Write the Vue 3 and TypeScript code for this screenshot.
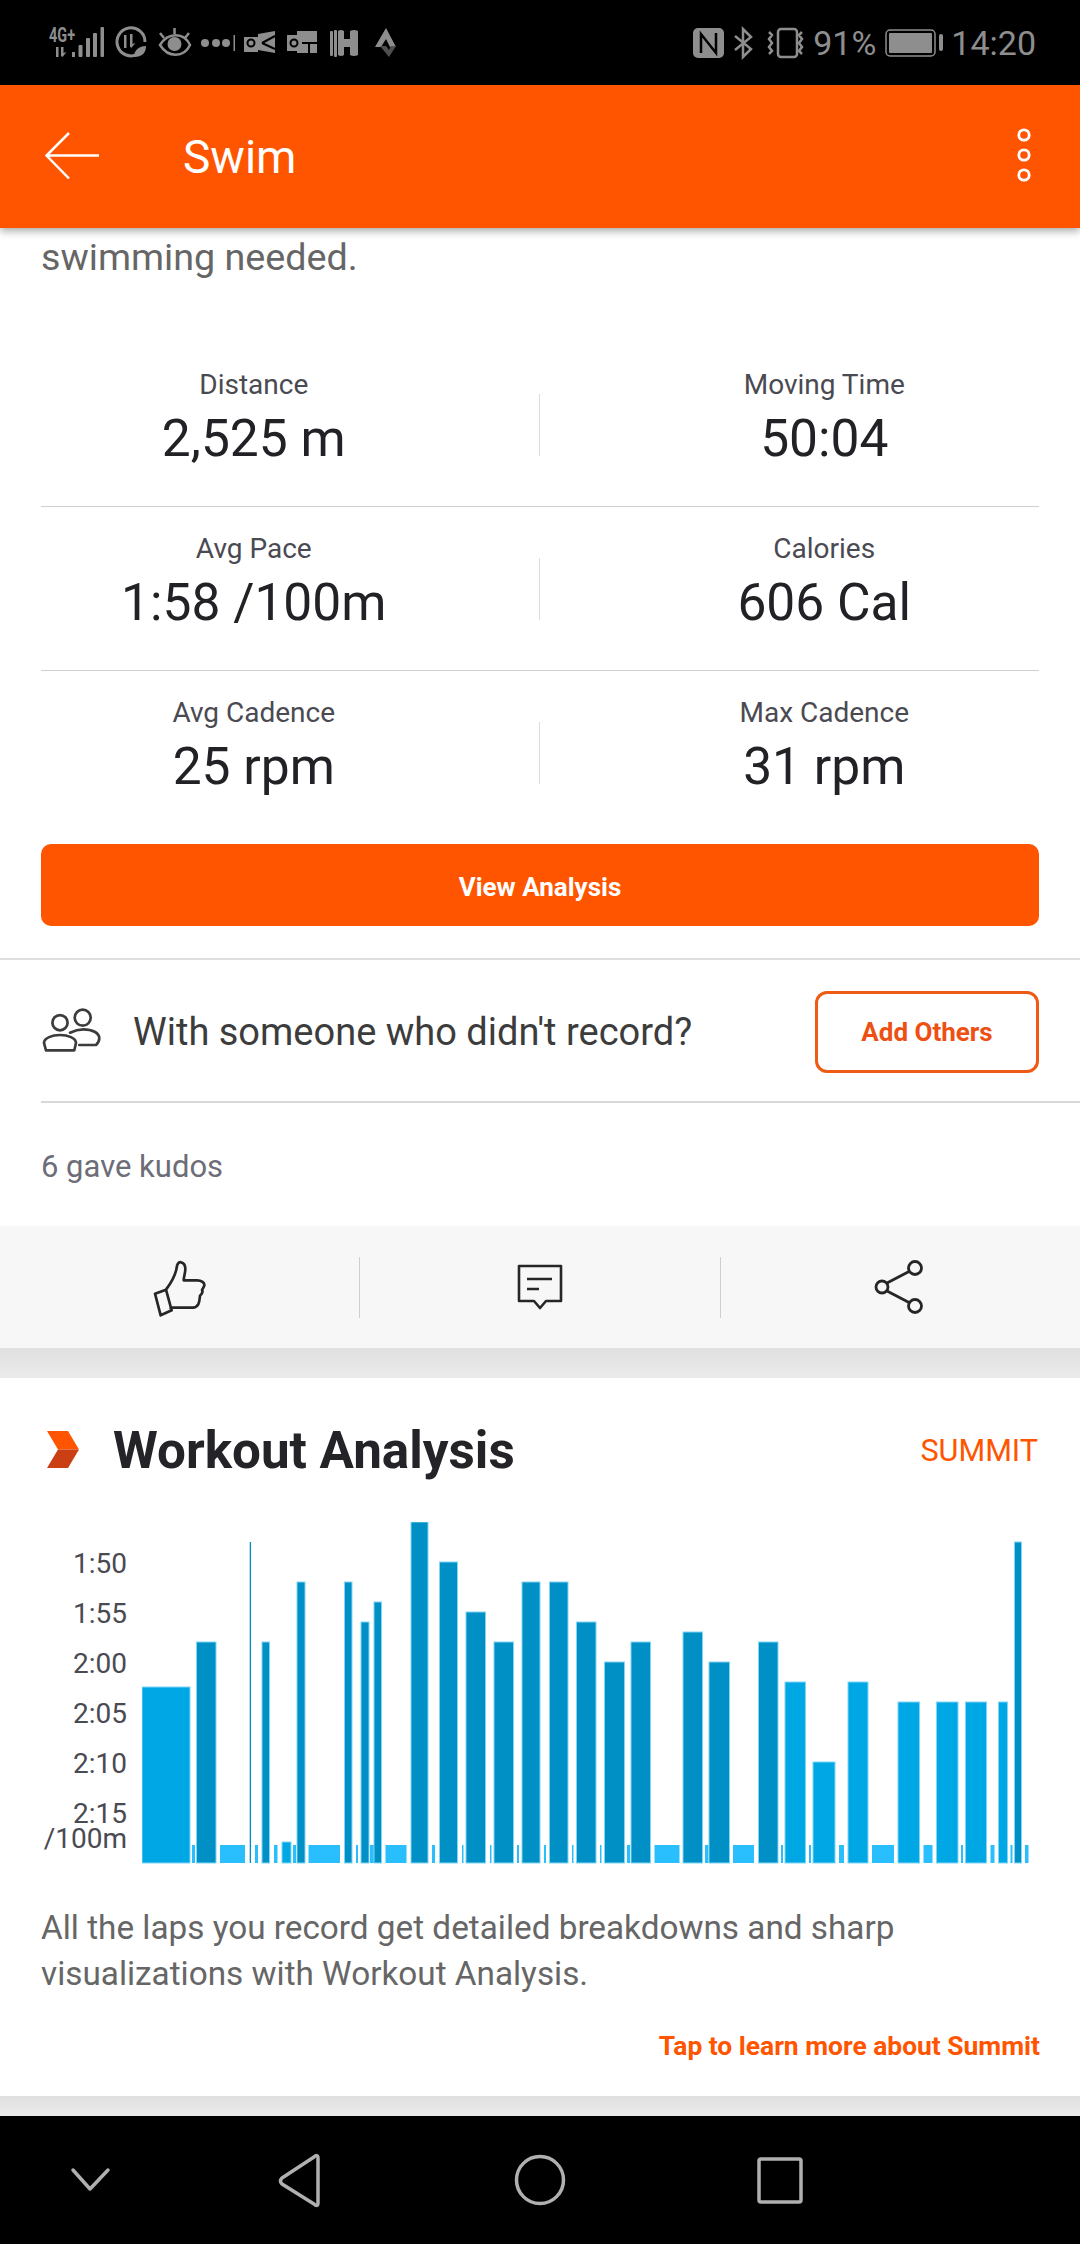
<template>
  <div class="screen">
    <div class="status-bar">
      <svg class="status-left" width="400" height="85" viewBox="0 0 400 85">
        <text x="49" y="42" class="net" textLength="26" lengthAdjust="spacingAndGlyphs">4G+</text>
        <g fill="#8e8e8e">
          <rect x="56" y="47" width="2.500" height="10" />
          <path d="M61 47h2.500v6l3-1-4 5-1.500-1z" />
          <rect x="72" y="52" width="3" height="5" />
          <rect x="78.500" y="45" width="4" height="12" rx="1" />
          <rect x="86" y="38" width="4" height="19" rx="1" />
          <rect x="93" y="33" width="4" height="24" rx="1" />
          <rect x="100.500" y="27" width="3.500" height="30" rx="1" />
        </g>
        <path d="M138 54a14 14 0 1 1 7-12" fill="none" stroke="#8e8e8e" stroke-width="3" />
        <g fill="#8e8e8e">
          <rect x="124" y="35" width="2.500" height="13" />
          <path d="M130 34h2.500v10l3-1-4.300 5-1.200-1.500z" />
          <path d="M134 57c0-7 5-11 12-11 0 7-4 11-12 11z" />
          <circle cx="174.500" cy="44" r="7" />
          <circle cx="205" cy="43" r="4" />
          <circle cx="216" cy="43" r="4" />
          <circle cx="226" cy="43" r="4" />
          <rect x="233.500" y="35" width="1.500" height="16" />
        </g>
        <path d="M160 45c8-13 24-13 30 0-6 13-22 13-30 0zM174.500 28v6M160 33l4 5M189 33l-4 5" fill="none" stroke="#8e8e8e" stroke-width="2.500" />
        <g fill="#8e8e8e">
          <path d="M244 37h14v-3l17-3v22l-17-3v2h-14z" />
          <path d="M287 35h10v-4h20v22h-20v-2h-10z" />
        </g>
        <circle cx="251" cy="43" r="3.500" fill="none" stroke="#000" stroke-width="2" />
        <path d="M262 43l13-7M262 43l13 6" stroke="#000" stroke-width="2" />
        <circle cx="294" cy="43" r="3.500" fill="none" stroke="#000" stroke-width="2" />
        <path d="M302 43h15M309 43v10" stroke="#000" stroke-width="2" />
        <g fill="#8e8e8e">
          <rect x="330" y="31" width="3" height="25" rx="1" />
          <rect x="334" y="30" width="3" height="27" rx="1" />
          <path d="M338 31q3-2 6 0v8h6v-8q4-2 8 0v24q-4 2-8 0v-8h-6v8q-3 2-6 0z" />
          <path d="M386 28l10 19h-6l-4-8-5 8h-6z" />
        </g>
        <path d="M380 46l9 11 7-11h-5l-2 4-3-4z" fill="#4f4f4f" />
      </svg>
      <div class="status-right">
        <svg width="114" height="34" viewBox="0 0 114 34">
          <rect x="0" y="2" width="31" height="30" rx="5" fill="#8e8e8e" />
          <path d="M8 27V8l15 19V7" fill="none" stroke="#000" stroke-width="2.500" />
          <path d="M42 24l16-13-8-8v28l8-8-16-13" fill="none" stroke="#8e8e8e" stroke-width="2.500" />
          <rect x="85" y="3" width="19" height="28" rx="3" fill="none" stroke="#8e8e8e" stroke-width="2.500" />
          <path d="M76 6l3 3-3 4 3 4-3 4 3 4-3 3M109 6l-3 3 3 4-3 4 3 4-3 4 3 3" fill="none" stroke="#8e8e8e" stroke-width="2.500" />
        </svg>
        <span class="battery-text">91%</span>
        <svg width="58" height="28" viewBox="0 0 58 28">
          <rect x="1" y="1" width="49" height="26" rx="4" fill="none" stroke="#8e8e8e" stroke-width="1.500" />
          <rect x="4" y="4" width="43" height="20" rx="1" fill="#8e8e8e" />
          <rect x="54" y="5" width="4" height="17" rx="2" fill="#8e8e8e" />
        </svg>
        <span class="clock">14:20</span>
      </div>
    </div>

    <header class="toolbar">
      <svg class="back" width="54" height="48" viewBox="0 0 54 48">
        <path d="M54 23.500H2M24 1L1.500 23.500 24 46.500" fill="none" stroke="#fff" stroke-width="2.500" />
      </svg>
      <h1 class="title">Swim</h1>
      <svg class="more" width="14" height="54" viewBox="0 0 14 54">
        <circle cx="7" cy="7" r="5.200" />
        <circle cx="7" cy="27" r="5.200" />
        <circle cx="7" cy="47" r="5.200" />
      </svg>
    </header>

    <main class="content">
      <p class="intro">swimming needed.</p>

      <section class="stats">
        <div v-for="(row, i) in statRows" :key="i" class="stat-row">
          <div class="stat">
            <div class="stat-label">{{ row[0].label }}</div>
            <div class="stat-value">{{ row[0].value }}</div>
          </div>
          <div class="stat-sep"></div>
          <div class="stat">
            <div class="stat-label">{{ row[1].label }}</div>
            <div class="stat-value">{{ row[1].value }}</div>
          </div>
        </div>
      </section>

      <button class="analysis-btn">View Analysis</button>

      <div class="others">
        <svg width="64" height="50" viewBox="0 -3 64 50">
          <g fill="none" stroke="#3c3c3c" stroke-width="2.700" stroke-linecap="round" stroke-linejoin="round">
            <circle cx="21" cy="12.700" r="7.600" />
            <circle cx="43.700" cy="7.700" r="8" />
            <path d="M7 40.300H35.300L37 33c0-5-8-8-16-8s-16 3-16 8z" />
            <path d="M31 22.700c4-2 8-3.400 13.300-3.400 9 0 16 3.500 16 9 0 3-1.300 5-3.300 6.700H40.300" />
          </g>
        </svg>
        <span class="others-text">With someone who didn't record?</span>
        <button class="add-btn">Add Others</button>
      </div>

      <div class="kudos">6 gave kudos</div>

      <div class="actions">
        <div class="action">
          <svg width="100" height="70" viewBox="0 0 300 210">
            <path d="M75 125l33-12 17 62-33 15zM108 113c12-16 27-38 32-65 1-12 6-19 13-17 9 2 13 10 13 20 0 12-5 24-5 34h40c14 0 23 7 22 15-1 6-5 10-7 14 3 5 2 10-6 17-2 12 0 34-22 36h-70" fill="none" stroke="#262626" stroke-width="8" stroke-linejoin="round" />
          </svg>
        </div>
        <div class="action">
          <svg width="46" height="46" viewBox="0 0 46 46">
            <path d="M2 2h42v35H29l-6 7-6-7H2z" fill="none" stroke="#262626" stroke-width="2.600" stroke-linejoin="round" />
            <path d="M10 15h25M10 25h12" stroke="#262626" stroke-width="2.600" />
          </svg>
        </div>
        <div class="action">
          <svg width="52" height="54" viewBox="0 0 52 54">
            <g fill="none" stroke="#262626" stroke-width="2.800">
              <circle cx="8" cy="27" r="6" />
              <circle cx="41" cy="8" r="6.500" />
              <circle cx="41" cy="46" r="6.500" />
              <path d="M13 23l23-12M13 31l23 12" />
            </g>
          </svg>
        </div>
      </div>

      <div class="gap"></div>

      <section class="card">
        <div class="card-head">
          <svg width="34" height="38" viewBox="0 0 34 38">
            <path d="M1 0h21l11 18.500H12z" fill="#ff5500" />
            <path d="M12 18.500h21L22 37H1z" fill="#cb3f14" />
          </svg>
          <h2 class="card-title">Workout Analysis</h2>
          <span class="summit">SUMMIT</span>
        </div>

        <div class="chart">
          <div class="axis">
            <span v-for="l in axisLabels" :key="l">{{ l }}</span>
            <span class="axis-unit">/100m</span>
          </div>
          <svg class="plot" width="938" height="342" viewBox="142 1522 938 342">
            <rect
              v-for="(b, i) in bars"
              :key="i"
              :x="b.x"
              :y="b.y"
              :width="b.w"
              :height="1863 - b.y"
              :fill="b.fill"
              :stroke="b.edge"
              stroke-width="1"
            />
          </svg>
        </div>

        <p class="blurb">All the laps you record get detailed breakdowns and sharp visualizations with Workout Analysis.</p>
        <div class="learn">Tap to learn more about Summit</div>
      </section>

      <div class="gap gap-bottom"></div>
    </main>

    <nav class="nav-bar">
      <svg class="nav-svg" width="1080" height="128" viewBox="0 0 1080 128">
        <g fill="none" stroke="#b0b0b0" stroke-width="3.500" stroke-linejoin="round" stroke-linecap="round">
          <path d="M73 54l17 19 18-19" />
          <path d="M318 42v45c0 3-2 3-4 1l-32-20c-2-2-2-4 0-6l32-21c2-2 4-2 4 1z" />
          <circle cx="540" cy="64" r="23.500" />
          <rect x="759" y="43" width="42" height="43" rx="2" />
        </g>
      </svg>
    </nav>
  </div>
</template>

<script setup lang="ts">
type Stat = { label: string; value: string };
type Kind = 'm' | 'd' | 'l';

const statRows: [Stat, Stat][] = [
  [{ label: 'Distance', value: '2,525 m' }, { label: 'Moving Time', value: '50:04' }],
  [{ label: 'Avg Pace', value: '1:58 /100m' }, { label: 'Calories', value: '606 Cal' }],
  [{ label: 'Avg Cadence', value: '25 rpm' }, { label: 'Max Cadence', value: '31 rpm' }],
];

const axisLabels = ['1:50', '1:55', '2:00', '2:05', '2:10', '2:15'];

// [left, right, top, kind] in page pixels; short light bars have no top of their own
const laps: [number, number, number, Kind][] = [
  [142, 190, 1687, 'm'], [192, 195, 1845, 'l'], [196.5, 216, 1642, 'd'], [220, 245, 1845, 'l'],
  [249.7, 251, 1542, 'd'], [255, 258, 1845, 'l'], [262, 269.5, 1642, 'd'], [274, 277.5, 1845, 'l'],
  [282, 291, 1842, 'm'], [293, 296, 1845, 'l'], [297, 305, 1582, 'd'], [308.5, 340, 1845, 'l'],
  [344.5, 352, 1582, 'd'], [356, 358, 1845, 'l'], [361, 369, 1622, 'd'], [370, 374, 1845, 'l'],
  [374, 381.5, 1602, 'd'], [385.5, 406.5, 1845, 'l'], [411, 428, 1522, 'd'], [432, 435, 1845, 'l'],
  [439.5, 457.5, 1562, 'd'], [462, 463.5, 1845, 'l'], [466, 485.5, 1612, 'd'], [490, 491.5, 1845, 'l'],
  [494, 513.5, 1642, 'd'], [517, 519, 1845, 'l'], [522, 540, 1582, 'd'], [544, 546, 1845, 'l'],
  [549.5, 568, 1582, 'd'], [572, 573.5, 1845, 'l'], [576.5, 596, 1622, 'd'], [600, 601.5, 1845, 'l'],
  [604.5, 624.5, 1662, 'd'], [627, 630, 1845, 'l'], [631, 650.5, 1642, 'd'], [654.5, 679.5, 1845, 'l'],
  [683, 702.5, 1632, 'd'], [705, 708.5, 1845, 'l'], [709, 729.5, 1662, 'd'], [733, 754, 1845, 'l'],
  [758.5, 778, 1642, 'd'], [781, 783, 1845, 'l'], [785, 805.5, 1682, 'm'], [809, 811, 1845, 'l'],
  [813, 835, 1762, 'm'], [839, 844, 1845, 'l'], [848, 868, 1682, 'm'], [872, 894, 1845, 'l'],
  [898, 919.5, 1702, 'm'], [923.5, 932.5, 1845, 'l'], [936.5, 958, 1702, 'm'], [961, 963, 1845, 'l'],
  [965.5, 986.5, 1702, 'm'], [990.5, 994.5, 1845, 'l'], [998.5, 1007.5, 1702, 'm'], [1010.5, 1012.5, 1845, 'l'],
  [1014.5, 1021.5, 1542, 'd'], [1025, 1028.5, 1845, 'l'],
];

const colors: Record<Kind, string> = { m: '#00a7e5', d: '#0090c5', l: '#29bfff' };

const bars = laps.map(([x0, x1, top, kind]) => ({
  x: x0,
  y: top,
  w: x1 - x0,
  fill: colors[kind],
  edge: kind === 'l' || x1 - x0 < 3 ? 'none' : '#7fd6f5',
}));
</script>

<style>
html,
body {
  margin: 0;
  background: #fff;
}
</style>

<style scoped>
.screen {
  width: 1080px;
  height: 2244px;
  display: flex;
  flex-direction: column;
  overflow: hidden;
  background: #fff;
  font-family: Roboto, "Noto Sans", sans-serif;
}

.status-bar {
  height: 85px;
  flex: none;
  background: #000;
  display: flex;
  align-items: center;
  justify-content: space-between;
  color: #8e8e8e;
}

.status-left {
  display: block;
}

.net {
  font-family: Roboto, sans-serif;
  font-size: 20px;
  font-weight: 700;
  fill: #8e8e8e;
}

.status-right {
  display: flex;
  align-items: center;
  padding-right: 44px;
  font-size: 34px;
}

.battery-text {
  margin-left: 6px;
  margin-right: 9px;
}

.clock {
  margin-left: 8px;
}

.toolbar {
  height: 143px;
  flex: none;
  background: #ff5500;
  display: flex;
  align-items: center;
  padding: 0 49px 0 45px;
  position: relative;
  z-index: 2;
  box-shadow: 0 3px 8px rgba(0, 0, 0, 0.35);
}

.back {
  margin-top: -1px;
}

.title {
  margin: 0 0 0 84px;
  font-size: 46px;
  font-weight: 400;
  color: #fff;
  flex: 1;
}

.more {
  margin-top: -3px;
}

.more circle {
  fill: none;
  stroke: #fff;
  stroke-width: 2.8;
}

.content {
  flex: 1;
  display: flex;
  flex-direction: column;
  min-height: 0;
}

.intro {
  margin: 6px 0 63px;
  padding-left: 41px;
  font-size: 37.7px;
  line-height: 46px;
  color: #666;
}

.stats {
  padding: 0 41px;
}

.stat-row {
  display: grid;
  grid-template-columns: 1fr 1px 1fr;
  column-gap: 72px;
  align-items: center;
  height: 163px;
  padding-right: 2px;
  border-bottom: 1px solid #d0d0d4;
}

.stat-row:last-child {
  border-bottom: none;
}

.stat {
  text-align: center;
  padding-bottom: 14px;
}

.stat-label {
  font-size: 28px;
  line-height: 36px;
  color: #4a4a52;
}

.stat-value {
  margin-top: 6px;
  font-size: 51.5px;
  line-height: 60px;
  color: #222226;
}

.stat-sep {
  height: 62px;
  background: #dcdcdc;
}

.analysis-btn {
  margin: 10px 41px 32px;
  height: 82px;
  flex: none;
  padding: 3px 0 0;
  border: none;
  border-radius: 10px;
  background: #ff5500;
  color: #fff;
  font-family: inherit;
  font-size: 26px;
  font-weight: 700;
}

.others {
  height: 145px;
  flex: none;
  padding: 0 41px;
  display: flex;
  align-items: center;
  border-top: 2px solid #dedede;
  box-sizing: border-box;
  position: relative;
}

.others::after {
  content: "";
  position: absolute;
  left: 41px;
  right: 0;
  bottom: 0;
  height: 2px;
  background: #d8d8d8;
}

.others svg {
  margin-left: -2px;
  flex: none;
}

.others-text {
  margin-left: 30px;
  font-size: 38px;
  color: #3c3c3c;
  flex: 1;
}

.add-btn {
  width: 224px;
  height: 82px;
  border: 3px solid #ee5b14;
  border-radius: 12px;
  background: #fff;
  color: #ee5014;
  font-family: inherit;
  font-size: 26px;
  font-weight: 700;
}

.kudos {
  height: 123px;
  flex: none;
  padding: 3px 41px 0;
  box-sizing: border-box;
  display: flex;
  align-items: center;
  font-size: 31px;
  color: #6d6d78;
}

.actions {
  height: 122px;
  flex: none;
  background: #f7f7f7;
  display: flex;
  align-items: center;
}

.action {
  flex: 1;
  height: 61px;
  display: flex;
  align-items: center;
  justify-content: center;
  border-left: 1px solid #cfcfcf;
}

.action:first-child {
  border-left: none;
}

.gap {
  height: 30px;
  flex: none;
  background: linear-gradient(#e0e0e0, #ebebeb);
}

.gap-bottom {
  height: 20px;
}

.card {
  height: 718px;
  flex: none;
  box-sizing: border-box;
  padding-top: 52px;
  display: flex;
  flex-direction: column;
}

.card-head {
  display: flex;
  align-items: center;
  height: 40px;
  padding: 0 42px 0 46px;
}

.card-title {
  margin: 0 0 0 33px;
  font-size: 51.2px;
  font-weight: 700;
  color: #242428;
  flex: 1;
}

.summit {
  font-size: 30.6px;
  color: #ff5500;
}

.chart {
  margin-top: 52px;
  display: flex;
}

.axis {
  width: 127px;
  flex: none;
  padding-top: 17px;
  box-sizing: border-box;
  display: flex;
  flex-direction: column;
  align-items: flex-end;
  font-size: 28px;
  line-height: 50px;
  color: #4a4a52;
}

.axis-unit {
  margin-top: -25px;
}

.plot {
  margin-left: 15px;
  display: block;
}

.blurb {
  margin: 41px 0 0;
  padding: 0 41px;
  font-size: 33.3px;
  line-height: 46px;
  color: #666;
}

.learn {
  margin-top: 29px;
  padding-right: 40px;
  text-align: right;
  font-size: 26.4px;
  font-weight: 700;
  line-height: 40px;
  color: #ff5500;
}

.nav-bar {
  height: 128px;
  flex: none;
  background: #000;
}

.nav-svg {
  display: block;
}
</style>
